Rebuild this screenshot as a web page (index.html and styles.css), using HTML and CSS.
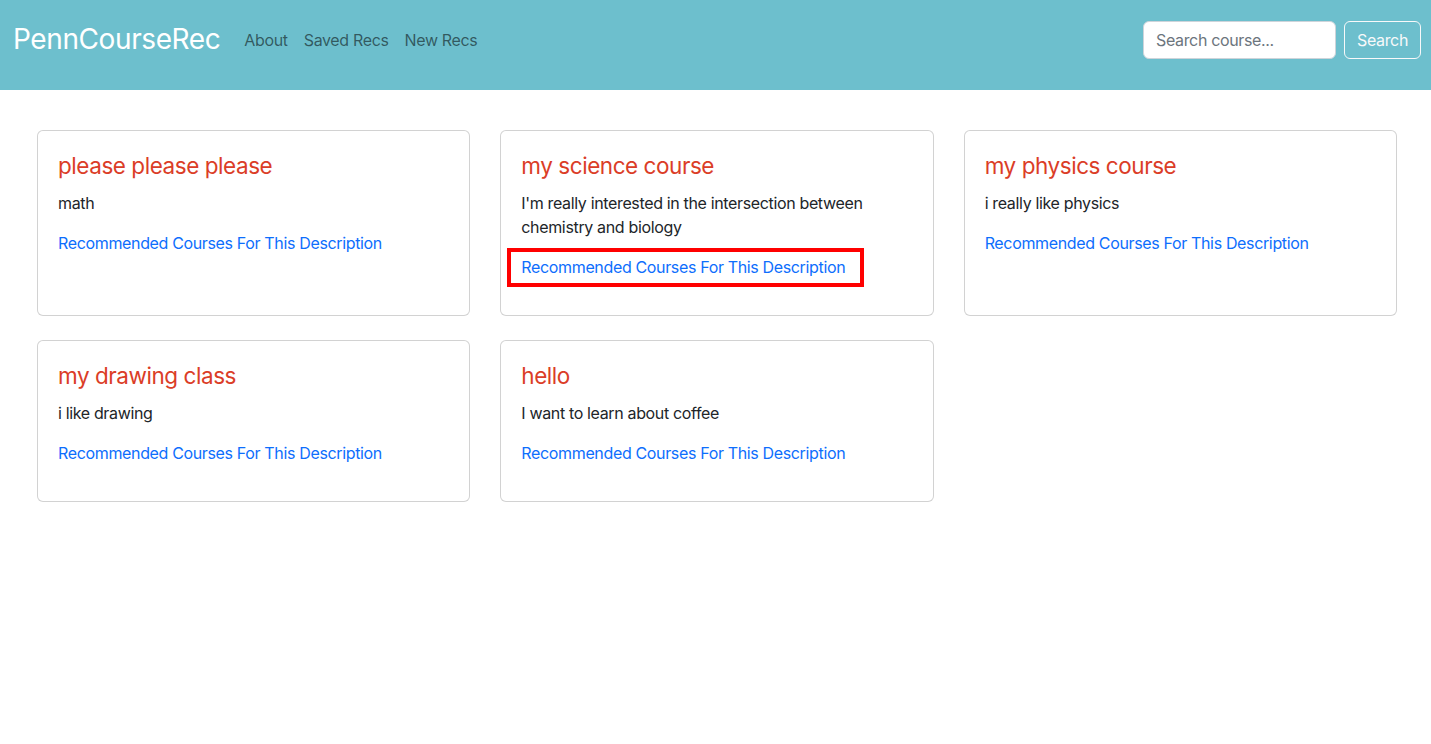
FILE: index.html
```html
<!DOCTYPE html>
<html lang="en">
<head>
<meta charset="utf-8">
<title>PennCourseRec</title>
<link rel="stylesheet" href="styles.css">
</head>
<body>
<nav class="navbar">
  <div class="nav-left">
    <a class="brand" href="#">PennCourseRec</a>
    <a class="nav-link" href="#">About</a>
    <a class="nav-link" href="#">Saved Recs</a>
    <a class="nav-link" href="#">New Recs</a>
  </div>
  <form class="search">
    <input class="search-input" type="text" placeholder="Search course...">
    <button class="search-btn" type="button">Search</button>
  </form>
</nav>
<main class="grid">
  <div class="card">
    <h4 class="card-title">please please please</h4>
    <p class="card-text">math</p>
    <p class="card-link-wrap"><a class="card-link" href="#">Recommended Courses For This Description</a></p>
  </div>
  <div class="card">
    <h4 class="card-title">my science course</h4>
    <p class="card-text">I'm really interested in the intersection between chemistry and biology</p>
    <p class="card-link-wrap"><a class="card-link highlighted" href="#">Recommended Courses For This Description</a></p>
  </div>
  <div class="card">
    <h4 class="card-title">my physics course</h4>
    <p class="card-text">i really like physics</p>
    <p class="card-link-wrap"><a class="card-link" href="#">Recommended Courses For This Description</a></p>
  </div>
  <div class="card">
    <h4 class="card-title">my drawing class</h4>
    <p class="card-text">i like drawing</p>
    <p class="card-link-wrap"><a class="card-link" href="#">Recommended Courses For This Description</a></p>
  </div>
  <div class="card">
    <h4 class="card-title">hello</h4>
    <p class="card-text">I want to learn about coffee</p>
    <p class="card-link-wrap"><a class="card-link" href="#">Recommended Courses For This Description</a></p>
  </div>
</main>
</body>
</html>
```

FILE: styles.css
```css
* { box-sizing: border-box; }
html, body {
  margin: 0;
  padding: 0;
  background: #fff;
  font-family: Inter, "Liberation Sans", sans-serif;
  font-size: 16px;
  line-height: 1.5;
  letter-spacing: -0.35px;
  color: #212529;
}
.navbar {
  height: 90px;
  background: #6dbfcd;
  display: flex;
  align-items: flex-start;
  justify-content: space-between;
  padding: 21px 10px 0 13px;
}
.nav-left {
  display: flex;
  align-items: center;
  height: 38px;
}
.brand {
  color: #fff;
  text-decoration: none;
  font-size: 28px;
  line-height: 1.2;
  margin-right: 16px;
  letter-spacing: -0.4px;
}
.nav-link {
  color: rgba(0,0,0,0.55);
  text-decoration: none;
  padding: 8px 8px;
}
.search {
  display: flex;
  align-items: center;
  gap: 8px;
  height: 38px;
}
.search-input {
  width: 193px;
  height: 38px;
  border: 1px solid #ced4da;
  border-radius: 6px;
  padding: 6px 12px;
  font-family: inherit;
  font-size: 16px;
  letter-spacing: -0.35px;
  color: #212529;
  background: #fff;
}
.search-input::placeholder { color: #6c757d; }
.search-btn {
  height: 38px;
  padding: 6px 12px;
  border: 1px solid #f8f9fa;
  border-radius: 6px;
  background: transparent;
  color: #f8f9fa;
  font-family: inherit;
  font-size: 16px;
  letter-spacing: -0.35px;
}
.grid {
  display: grid;
  grid-template-columns: repeat(3, 1fr);
  column-gap: 30px;
  row-gap: 24px;
  padding: 40px 34px 0 37px;
  align-items: stretch;
}
.card {
  border: 1px solid rgba(0,0,0,0.176);
  border-radius: 6px;
  padding: 20px;
  background: #fff;
}
.card-title {
  margin: 0 0 11px 0;
  padding-top: 1px;
  font-size: 22.5px;
  font-weight: 400;
  line-height: 28px;
  letter-spacing: -0.45px;
  color: #db3d27;
}
.card-text {
  margin: 0 0 16px 0;
}
.card-link-wrap {
  margin: 0 0 16px 0;
}
.card-link {
  color: #0d6efd;
  text-decoration: none;
}
.card-link.highlighted {
  display: inline-block;
  padding: 3px 15px 4px 10px;
  margin: -3px -15px -4px -10px;
  outline: 4px solid #ff0000;
  outline-offset: 0;
}
```
